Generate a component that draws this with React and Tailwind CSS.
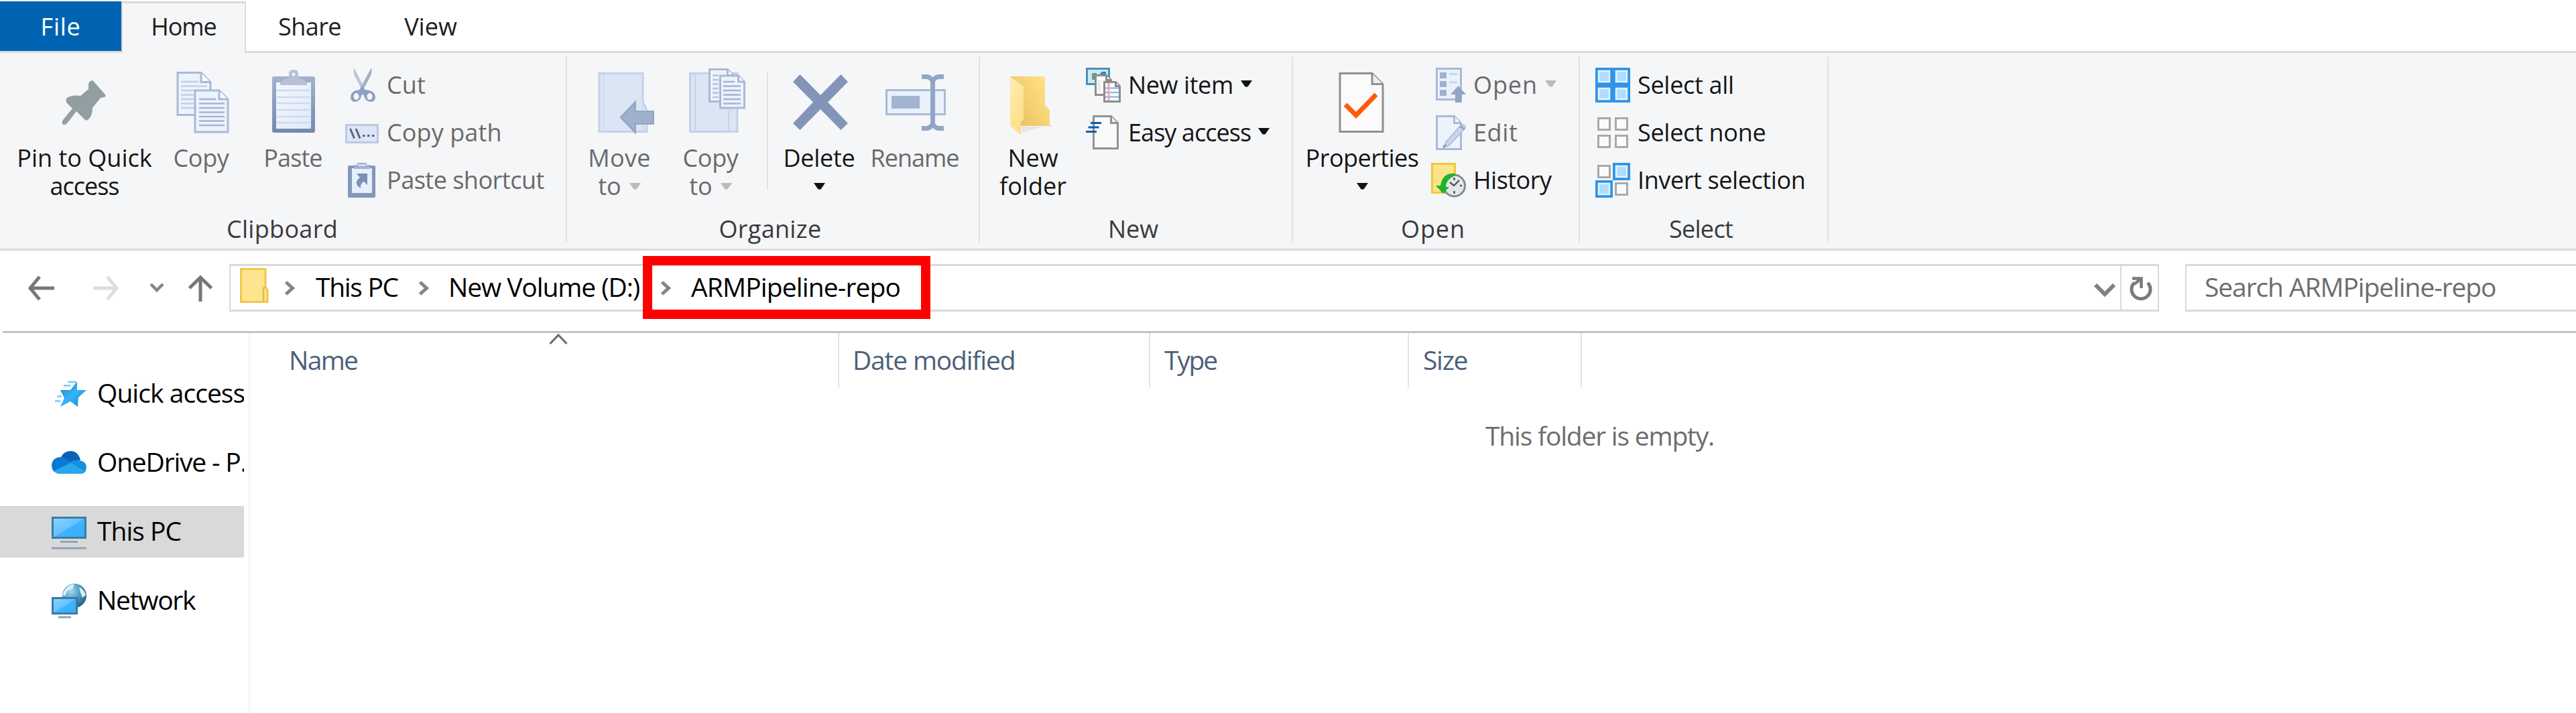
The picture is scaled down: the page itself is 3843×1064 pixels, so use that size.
import React from "react";

/* ---------- shared pieces ---------- */

function Big({ children }) {
  return (
    <svg className="block h-[104px] w-[104px] shrink-0" viewBox="0 0 104 104" fill="none">
      {children}
    </svg>
  );
}

function Small({ children }) {
  return (
    <svg className="block h-[52px] w-[52px] shrink-0" viewBox="0 0 52 52" fill="none">
      {children}
    </svg>
  );
}

function Caret({ muted }) {
  return (
    <svg className="block h-[10px] w-[17px] shrink-0" viewBox="0 0 17 10">
      <path d="M0 0H17L10.5 9.500H6.500Z" fill={muted ? "#b9bbbd" : "#111111"} />
    </svg>
  );
}

function Lines({ x1, x2, ys, color, w = 2.6 }) {
  return ys.map((y) => <path key={y} d={`M${x1} ${y}H${x2}`} stroke={color} strokeWidth={w} />);
}

function Doc({ x, y, w, h, f, stroke = "#a9bad6", fill = "#edf3fc", sw = 3, foldFill = "#f7faff" }) {
  return (
    <g stroke={stroke} strokeWidth={sw} fill={fill}>
      <path d={`M${x} ${y}H${x + w - f}L${x + w} ${y + f}V${y + h}H${x}Z`} />
      <path d={`M${x + w - f} ${y}V${y + f}H${x + w}`} fill={foldFill} />
    </g>
  );
}

/* ---------- large ribbon icons ---------- */

const PinIcon = () => (
  <Big>
    <path
      d="M63 22Q65 22 67 25L82 42Q85 45 82 47L76 48L64 63Q64 75 58 80Q55 83 52 80L40 68L26 86Q22 90 19 87Q18 84 20 81L34 64L26 56Q23 52 26 48Q33 43 46 45L58 35V27Q59 23 63 22Z"
      fill="#939ea3"
    />
  </Big>
);

const CopyIcon = () => (
  <Big>
    <Doc x={17} y={10.500} w={49} h={63} f={14} />
    <Lines x1={22} x2={48} ys={[24]} color="#c3d0e6" />
    <Lines x1={22} x2={61} ys={[30.500]} color="#c3d0e6" />
    <Lines x1={22} x2={42} ys={[37, 43.500, 50, 56.500, 63]} color="#c3d0e6" />
    <Doc x={43} y={37} w={49} h={62} f={13} />
    <Lines x1={49} x2={74} ys={[50]} color="#a4b6d3" />
    <Lines x1={49} x2={87} ys={[56.500, 63, 69.500, 76, 82.500, 89]} color="#a4b6d3" />
  </Big>
);

const PasteIcon = () => (
  <Big>
    <defs>
      <linearGradient id="board" x1="0" y1="0" x2="0" y2="1">
        <stop offset="0" stopColor="#a3b3ce" />
        <stop offset="1" stopColor="#7487ad" />
      </linearGradient>
      <linearGradient id="paper" x1="0" y1="0" x2="1" y2="1">
        <stop offset="0" stopColor="#f3f8ff" />
        <stop offset="1" stopColor="#dfe9f9" />
      </linearGradient>
    </defs>
    <rect x="21" y="16" width="64" height="84" rx="3" fill="url(#board)" />
    <rect x="27" y="25" width="52" height="69" fill="url(#paper)" />
    <Lines x1={28} x2={78} ys={[37, 47, 56, 66, 76, 85]} color="#d0daec" />
    <path d="M33 29V25Q38 20 46 18V12Q46 6 53 6Q60 6 60 12V18Q68 20 73 25V29Z" fill="#b7c1d3" />
    <circle cx="53" cy="13" r="2.500" fill="#f5f6f8" />
  </Big>
);

const MoveIcon = () => (
  <Big>
    <path d="M22 11.500H87V54L93 66V98.500H22Z" fill="#dbe5f4" stroke="#c3d1e7" strokeWidth="3" />
    <path d="M29 14V96M87 54V97" stroke="#cddaed" strokeWidth="2" />
    <path d="M52 77L77 51V67H104V88H77V103Z" fill="#a0b0cd" />
    <path d="M55 77L75.500 55.500V68.500H102.500V86.500H75.500V98.500Z" fill="none" stroke="#8fa1c2" strokeWidth="1.500" />
  </Big>
);

const CopyToIcon = () => (
  <Big>
    <path d="M21.500 11.500H92V98.500H21.500Z" fill="#dbe5f4" stroke="#c3d1e7" strokeWidth="3" />
    <path d="M29 14V96M79 97V70L82 64" stroke="#c5d3e8" strokeWidth="2" />
    <Doc x={50.500} y={5.500} w={36} h={48} f={9} />
    <Lines x1={55} x2={64} ys={[14.500, 21, 27.500, 34, 40.500, 47]} color="#b5c4dd" />
    <Doc x={66.500} y={15} w={36} h={48} f={9} />
    <Lines x1={71} x2={88} ys={[24]} color="#a4b6d3" />
    <Lines x1={71} x2={97} ys={[30.500, 37, 43.500, 50, 56.500]} color="#a4b6d3" />
  </Big>
);

const DeleteIcon = () => (
  <Big>
    <path
      d="M13 24L23.500 13L54 44L84.500 13L95 24L65 54.500L95 86L84.500 96L54 65L23.500 96L13 86L43 54.500Z"
      fill="#8295b8"
    />
  </Big>
);

const RenameIcon = () => (
  <Big>
    <rect x="9.500" y="36.500" width="87" height="36" fill="#e9f1fd" stroke="#a9bad6" strokeWidth="3" />
    <rect x="17" y="45" width="42" height="19" fill="#a3b4d0" />
    <path d="M62 16.500H70Q75 17 78.500 23Q82 17 87 16.500H95M78.500 20V90M62 93.500H70Q75 93 78.500 87Q82 93 87 93.500H95" stroke="#93a5c5" strokeWidth="7" />
  </Big>
);

const NewFolderIcon = () => (
  <Big>
    <defs>
      <linearGradient id="nfBack" x1="0" y1="1" x2="1" y2="0.300">
        <stop offset="0" stopColor="#e6bd5a" />
        <stop offset="1" stopColor="#ffe084" />
      </linearGradient>
      <linearGradient id="nfFront" x1="0" y1="0" x2="0.400" y2="1">
        <stop offset="0" stopColor="#ffedb3" />
        <stop offset="1" stopColor="#ffdf85" />
      </linearGradient>
    </defs>
    <path d="M34 91H82L78 88L36 100Z" fill="#e6e6e8" />
    <path d="M18 16H70V59L77 66V90H34Z" fill="url(#nfBack)" />
    <path d="M18 16L38 31V80L34 84V103L18 90Z" fill="url(#nfFront)" />
  </Big>
);

const PropertiesIcon = () => (
  <Big>
    <Doc x={19} y={11.500} w={64} h={87} f={16} stroke="#8f8f8f" fill="#fbfbfb" foldFill="#efefef" />
    <path d="M27 58L43 74L73 43" stroke="#ff5a0a" strokeWidth="7" />
  </Big>
);

/* ---------- small ribbon icons ---------- */

const CutIcon = () => (
  <Small>
    <path d="M14 0Q12 8 17 16L27 34L30 31Z" fill="#b9c5d8" />
    <path d="M40 0Q42 8 37 16L27 34L23 31Z" fill="#a3b0c9" />
    <path d="M26 28L31 33Q45 34 46 43Q46 51 39 51Q31 51 28 40H26Q23 51 16 51Q9 51 9 43Q10 34 22 33Z" fill="#8ea1c2" />
    <ellipse cx="17.500" cy="43" rx="4" ry="5" fill="#f5f6f8" />
    <ellipse cx="37.500" cy="43" rx="4" ry="5" fill="#f5f6f8" />
  </Small>
);

const CopyPathIcon = () => (
  <Small>
    <rect x="2.500" y="14.500" width="47" height="26" fill="#dde6f4" stroke="#bccae1" strokeWidth="3" />
    <path d="M8.500 20L14.500 34.500M17 20L23 34.500" stroke="#52678f" strokeWidth="3" />
    <path d="M27 29H30.500V32H27ZM34 29H37.500V32H34ZM41 29H44.500V32H41Z" fill="#52678f" />
  </Small>
);

const PasteShortcutIcon = () => (
  <Small>
    <rect x="5" y="4" width="41" height="48" rx="2" fill="#8497b9" />
    <rect x="11" y="8" width="30" height="37" fill="#e6effc" />
    <path d="M14 3H19V0H33V3H38V9H14Z" fill="#a3b1ca" />
    <path d="M20 3.500H32" stroke="#e6effc" strokeWidth="2" />
    <path d="M18 16H34V33L29 28Q23 31 24 38Q12 30 23 22Z" fill="#7c90b5" />
  </Small>
);

const NewItemIcon = () => (
  <Small>
    <rect x="1.500" y="1.500" width="33" height="23" fill="#c9ebf8" stroke="#4c90b6" strokeWidth="3" />
    <path d="M9 8H16V18H9Z" fill="#6f9a84" />
    <path d="M21 9L24 6H30V12H21Z" fill="#3c87ad" />
    <Doc x={14.500} y={11.500} w={23} h={29} f={7} stroke="#8c8c8c" fill="#fdfdfd" foldFill="#fff" />
    <path d="M20 18V36" stroke="#ececec" strokeWidth="4" />
    <Doc x={27.500} y={21.500} w={23} h={29} f={6} stroke="#8c8c8c" fill="#ffffff" foldFill="#fff" />
    <Lines x1={29} x2={49} ys={[30.500, 37, 43.500]} color="#93c1ea" />
    <path d="M34 23V49" stroke="#f3a6a6" strokeWidth="3" />
  </Small>
);

const EasyAccessIcon = () => (
  <Small>
    <Doc x={11.500} y={1.500} w={36} h={48} f={10} stroke="#929292" fill="#fafafa" foldFill="#f2f2f2" />
    <path d="M7 11.500H23M3.500 18H19.500M0 24.500H16" stroke="#0b60ad" strokeWidth="3.200" />
  </Small>
);

const OpenIcon = () => (
  <Small>
    <rect x="8.500" y="1.500" width="36" height="46" fill="#eaf1fc" stroke="#a9bad6" strokeWidth="3" />
    <path d="M13 7H23V16H13ZM13 20H23V29H13ZM13 33H23V42H13Z" fill="#9fb0cd" />
    <path d="M27 9.500H39M27 22H39" stroke="#c8d5ea" strokeWidth="3" />
    <path d="M40.500 27L52 40H45.500V52H36V40H29Z" fill="#92a5c6" />
  </Small>
);

const EditIcon = () => (
  <Small>
    <Doc x={8.500} y={1.500} w={36} h={49} f={10} />
    <path d="M19 48L22 40L45 14Q51 13 51 19L27 45Z" fill="#c9d5e9" stroke="#a9b9d4" strokeWidth="1.500" />
    <path d="M43 16L50 21" stroke="#93a5c5" strokeWidth="3" />
    <path d="M18 48L22 44" stroke="#8497b9" strokeWidth="3" />
  </Small>
);

const HistoryIcon = () => (
  <Small>
    <rect x="1.500" y="1.500" width="34" height="43" fill="#fde48c" stroke="#eec83f" strokeWidth="3" />
    <circle cx="34.500" cy="34" r="16" fill="#e4e8ea" stroke="#84898c" strokeWidth="3" />
    <path d="M34.500 22V26M34.500 42V46M43 34H46M28 29L34 34L42 26" stroke="#4b5256" strokeWidth="2.400" />
    <path d="M36 16Q17 14 14 34H7L18 46L27 36H22Q22 25 36 19Z" fill="#1fb52a" />
  </Small>
);

const BlueCell = ({ x, y }) => (
  <g>
    <rect x={x + 2} y={y + 2} width="22" height="22" fill="#b2dcff" stroke="#2d95ea" strokeWidth="4" />
    <rect x={x + 5} y={y + 5} width="16" height="16" stroke="#e3f3ff" strokeWidth="2.500" />
  </g>
);

const GreyCell = ({ x, y }) => (
  <rect x={x + 1.5} y={y + 1.5} width="17" height="17" fill="#fbfbfb" stroke="#a9a9a9" strokeWidth="3" />
);

const SelectAllIcon = () => (
  <Small>
    <BlueCell x={0} y={0} />
    <BlueCell x={26} y={0} />
    <BlueCell x={0} y={26} />
    <BlueCell x={26} y={26} />
  </Small>
);

const SelectNoneIcon = () => (
  <Small>
    <GreyCell x={3} y={3} />
    <GreyCell x={29} y={3} />
    <GreyCell x={3} y={29} />
    <GreyCell x={29} y={29} />
  </Small>
);

const InvertIcon = () => (
  <Small>
    <GreyCell x={3} y={3} />
    <BlueCell x={26} y={0} />
    <BlueCell x={0} y={26} />
    <GreyCell x={29} y={29} />
  </Small>
);

/* ---------- sidebar icons ---------- */

const StarIcon = () => (
  <Small>
    <defs>
      <linearGradient id="star" x1="0" y1="0" x2="1" y2="1">
        <stop offset="0" stopColor="#1583c4" />
        <stop offset="0.500" stopColor="#35b3fb" />
        <stop offset="1" stopColor="#1587cb" />
      </linearGradient>
    </defs>
    <path d="M38 7V20L52 20L40 31L39 45L28 37L13 45L19 32L13 20L28 20Z" fill="url(#star)" />
    <path d="M24 8H36M18 13.500H28M8 29.500H15M5 36.500H13" stroke="#7cc6ee" strokeWidth="2.500" />
  </Small>
);

const CloudIcon = () => (
  <Small>
    <path d="M13 19Q18 8 28 8Q39 8 43 21L28 30Z" fill="#0a62b8" />
    <path d="M10 41Q0 40 0 29Q1 18 13 17Q20 17 27 24L44 32L8 41Z" fill="#0b78d3" />
    <path d="M24 27Q30 21 42 22Q52 24 52 33Q51 42 43 42Z" fill="#1590df" />
    <path d="M4 38Q16 30 30 26L49 38Q47 42 42 42H11Q7 42 4 38Z" fill="#28a7ea" />
  </Small>
);

const MonitorIcon = () => (
  <Small>
    <defs>
      <linearGradient id="screen" x1="0" y1="0" x2="1" y2="1">
        <stop offset="0" stopColor="#8fd3ff" />
        <stop offset="0.500" stopColor="#65c2ff" />
        <stop offset="0.510" stopColor="#41b3ff" />
        <stop offset="1" stopColor="#34adff" />
      </linearGradient>
    </defs>
    <rect x="1.500" y="4.500" width="49" height="30" fill="url(#screen)" stroke="#3a7ca6" strokeWidth="3" />
    <path d="M13 40.500H39M0 50H52" stroke="#91a3b8" strokeWidth="3" />
  </Small>
);

const NetworkIcon = () => (
  <Small>
    <defs>
      <radialGradient id="globe" cx="0.350" cy="0.300" r="0.800">
        <stop offset="0" stopColor="#a5dbea" />
        <stop offset="0.500" stopColor="#4a9cc2" />
        <stop offset="1" stopColor="#1f5878" />
      </radialGradient>
    </defs>
    <circle cx="34" cy="18" r="18" fill="url(#globe)" />
    <path d="M21 8Q27 0 34 1L31 8L24 10L20 18H17Q17 12 21 8ZM41 5Q49 9 51 17L46 21L43 13Z" fill="#d9f0f3" />
    <rect x="1.500" y="21.500" width="36" height="23" fill="url(#screen)" stroke="#3a7ca6" strokeWidth="3" />
    <path d="M10 50H29" stroke="#91a3b8" strokeWidth="3" />
  </Small>
);

/* ---------- ribbon building blocks ---------- */

function Group({ width, label, labelClass, children }) {
  return (
    <section className={`flex h-full shrink-0 flex-col border-r-2 border-[#dfe1e3] ${width}`}>
      <div className="flex h-[236px] shrink-0 items-start">{children}</div>
      <div className={`text-center leading-[41px] text-[#3a3a3a] ${labelClass}`}>{label}</div>
    </section>
  );
}

function BigButton({ className, icon, muted, children }) {
  return (
    <button
      className={`flex shrink-0 flex-col items-center pt-[13px] leading-[42px] ${muted ? "text-[#6a6a6a]" : "text-[#161616]"} ${className}`}
    >
      {icon}
      <div className="h-[13px] shrink-0" />
      {children}
    </button>
  );
}

function Row({ icon, text, track, muted, caret }) {
  return (
    <button className={`flex h-[71px] items-center gap-[11px] ${muted ? "text-[#6a6a6a]" : "text-[#161616]"}`}>
      <span className="flex items-center gap-[11px]">
        {icon}
        <span className={`leading-[44px] ${track}`}>{text}</span>
      </span>
      {caret && (
        <span className="pb-[3px]">
          <Caret muted={muted} />
        </span>
      )}
    </button>
  );
}

function Crumb() {
  return (
    <svg className="block h-[22px] w-[16px] shrink-0" viewBox="0 0 16 22" fill="none">
      <path d="M2.500 2L12.500 11L2.500 20" stroke="#868686" strokeWidth="5" />
    </svg>
  );
}

function SideItem({ icon, text, track, selected }) {
  return (
    <div className={`flex h-[77px] w-[364px] items-center gap-[16px] overflow-hidden pl-[77px] ${selected ? "bg-[#d9d9d9]" : ""}`}>
      {icon}
      <span className={`pb-[3px] leading-[54px] text-black ${track}`}>{text}</span>
    </div>
  );
}

/* ---------- page ---------- */

export default function App() {
  return (
    <div className="flex h-[1064px] w-[3843px] flex-col overflow-hidden whitespace-nowrap bg-white font-['Open_Sans','Noto_Sans',sans-serif] text-[36px]">
      {/* tabs */}
      <nav className="flex h-[76px] shrink-0 pt-[2px] leading-[75px] text-[#202020]">
        <div className="w-[181px] bg-[#0063b1] text-center tracking-[0.7px] text-white">File</div>
        <div className="z-10 -mb-[3px] w-[186px] border-x-2 border-t-3 border-[#d9dbdd] bg-[#f5f6f8] text-center leading-[70px] tracking-[-1.1px]">Home</div>
        <div className="w-[190px] text-center tracking-[-0.6px]">Share</div>
        <div className="w-[171px] text-center">View</div>
      </nav>

      {/* ribbon */}
      <div className="flex h-[298px] shrink-0 border-y-3 border-[#d9dbdd] bg-[#f5f6f8] pb-[9px] pt-[6px]">
        <Group width="w-[846px]" label="Clipboard" labelClass="pr-[2px] tracking-[0.3px]">
          <BigButton className="ml-[14px] w-[224px]" icon={<PinIcon />}>
            <span>Pin to Quick</span>
            <span className="tracking-[-1px]">access</span>
          </BigButton>
          <BigButton className="w-[124px]" icon={<CopyIcon />} muted>
            <span className="tracking-[-0.4px]">Copy</span>
          </BigButton>
          <BigButton className="w-[150px]" icon={<PasteIcon />} muted>
            <span className="tracking-[-0.9px]">Paste</span>
          </BigButton>
          <div className="flex flex-col pl-[2px] pt-[6px]">
            <Row icon={<CutIcon />} text="Cut" track="tracking-[0.1px]" muted />
            <Row icon={<CopyPathIcon />} text="Copy path" track="tracking-[0.1px]" muted />
            <Row icon={<PasteShortcutIcon />} text="Paste shortcut" track="tracking-[-0.5px]" muted />
          </div>
        </Group>

        <Group width="w-[616px]" label="Organize" labelClass="pr-[8px] tracking-[0.3px]">
          <BigButton className="ml-[10px] w-[136px]" icon={<MoveIcon />} muted>
            <span className="tracking-[0.3px]">Move</span>
            <span className="flex items-center gap-[12px]">to<Caret muted /></span>
          </BigButton>
          <BigButton className="w-[136px]" icon={<CopyToIcon />} muted>
            <span className="tracking-[-0.4px]">Copy</span>
            <span className="flex items-center gap-[12px]">to<Caret muted /></span>
          </BigButton>
          <div className="ml-[16px] mt-[23px] h-[176px] w-[2px] bg-[#dfe1e3]" />
          <BigButton className="w-[152px]" icon={<DeleteIcon />}>
            <span className="tracking-[-0.3px]">Delete</span>
            <span className="flex h-[42px] items-center"><Caret /></span>
          </BigButton>
          <BigButton className="w-[133px]" icon={<RenameIcon />} muted>
            <span className="tracking-[-1px]">Rename</span>
          </BigButton>
        </Group>

        <Group width="w-[467px]" label="New" labelClass="pr-[8px]">
          <BigButton className="w-[158px]" icon={<NewFolderIcon />}>
            <span>New</span>
            <span>folder</span>
          </BigButton>
          <div className="flex flex-col pt-[6px]">
            <Row icon={<NewItemIcon />} text="New item" track="tracking-[-0.4px]" caret />
            <Row icon={<EasyAccessIcon />} text="Easy access" track="tracking-[-0.94px]" caret />
          </div>
        </Group>

        <Group width="w-[428px]" label="Open" labelClass="pr-[8px] tracking-[0.9px]">
          <BigButton className="w-[206px]" icon={<PropertiesIcon />}>
            <span className="tracking-[-0.55px]">Properties</span>
            <span className="flex h-[42px] items-center"><Caret /></span>
          </BigButton>
          <div className="flex flex-col pt-[6px]">
            <Row icon={<OpenIcon />} text="Open" track="tracking-[0.9px]" muted caret />
            <Row icon={<EditIcon />} text="Edit" track="tracking-[0.6px]" muted />
            <Row icon={<HistoryIcon />} text="History" track="tracking-[-0.5px]" />
          </div>
        </Group>

        <Group width="w-[371px]" label="Select" labelClass="pr-[8px] tracking-[-0.7px]">
          <div className="flex flex-col pl-[23px] pt-[6px]">
            <Row icon={<SelectAllIcon />} text="Select all" track="tracking-[-0.3px]" />
            <Row icon={<SelectNoneIcon />} text="Select none" track="tracking-[-0.3px]" />
            <Row icon={<InvertIcon />} text="Invert selection" track="tracking-[-0.4px]" />
          </div>
        </Group>
      </div>

      {/* address bar */}
      <div className="relative flex h-[120px] shrink-0 items-start pt-[20px] text-[39px]">
        <div className="flex h-[71px] w-[342px] shrink-0 items-center">
          <svg className="ml-[41px] h-[40px] w-[40px] shrink-0" viewBox="0 0 40 40" fill="none">
            <path d="M18 3L4 20L18 37M4 20H40" stroke="#777777" strokeWidth="5" />
          </svg>
          <svg className="ml-[58px] h-[40px] w-[40px] shrink-0" viewBox="0 0 40 40" fill="none">
            <path d="M21 3L35 20L21 37M0 20H35" stroke="#dedede" strokeWidth="5" />
          </svg>
          <svg className="ml-[44px] h-[14px] w-[22px] shrink-0" viewBox="0 0 22 14" fill="none">
            <path d="M2 1L11 10L20 1" stroke="#858585" strokeWidth="4.500" />
          </svg>
          <svg className="ml-[35px] h-[40px] w-[38px] shrink-0" viewBox="0 0 38 40" fill="none">
            <path d="M2.500 20L19 4L35.500 20M19 4V40" stroke="#777777" strokeWidth="5" />
          </svg>
        </div>

        <div className="flex h-[71px] w-[2879px] shrink-0 items-center border-x-2 border-y-3 border-[#d9d9d9] text-black">
          <svg className="ml-[13px] -mt-[7px] h-[52px] w-[44px] shrink-0" viewBox="0 0 44 52" fill="none">
            <path d="M2.500 1.500H39V28L42 33V50.500H2.500Z" fill="#fee48f" stroke="#efc94b" strokeWidth="3" />
            <path d="M36 49V30L39 28" stroke="#e6bb3e" strokeWidth="2.500" />
          </svg>
          <span className="ml-[23px]"><Crumb /></span>
          <span className="ml-[31px] w-[122px] pb-[4px] leading-[54px] tracking-[-1.3px]">This PC</span>
          <span className="ml-[31px]"><Crumb /></span>
          <span className="ml-[29px] w-[284px] pb-[4px] leading-[54px] tracking-[-1.1px]">New Volume (D:)</span>
          <span className="ml-[32px]"><Crumb /></span>
          <span className="ml-[30px] pb-[4px] leading-[54px] tracking-[-0.87px]">ARMPipeline-repo</span>
          <svg className="ml-auto mt-[6px] h-[22px] w-[32px] shrink-0" viewBox="0 0 32 22" fill="none">
            <path d="M2 3L16 17L30 3" stroke="#808080" strokeWidth="6" />
          </svg>
          <div className="ml-[7px] flex h-full w-[56px] items-center justify-center border-l-2 border-[#d9d9d9] pl-[3px]">
            <svg className="h-[38px] w-[36px]" viewBox="0 0 36 38" fill="none">
              <path d="M8 11A14 14 0 1 0 28 11" stroke="#7a7a7a" strokeWidth="5" />
              <path d="M5 4.500H18.500V19" stroke="#7a7a7a" strokeWidth="4.500" />
              <path d="M18 5L8 13" stroke="#7a7a7a" strokeWidth="4.500" />
            </svg>
          </div>
        </div>

        <div className="-mr-[4px] ml-[39px] flex h-[71px] grow items-center border-y-3 border-l-2 border-[#d9d9d9] pl-[27px] text-[#6d6d6d]">
          <span className="pb-[4px] leading-[54px] tracking-[-1.1px]">Search ARMPipeline-repo</span>
        </div>

        {/* highlight frame laid over the last path segment */}
        <div className="absolute left-[959px] top-[8px] h-[94px] w-[429px] border-[14px] border-[#ff0000]" />
      </div>

      {/* body */}
      <div className="ml-[4px] h-[3px] shrink-0 bg-[#c3c3c3]" />
      <div className="flex grow text-[39px]">
        <aside className="flex w-[373px] shrink-0 flex-col gap-[26px] border-r-2 border-[#f3f3f3] pt-[52px]">
          <SideItem icon={<StarIcon />} text="Quick access" track="tracking-[-0.95px]" />
          <SideItem icon={<CloudIcon />} text="OneDrive - P." track="tracking-[-1.2px]" />
          <SideItem icon={<MonitorIcon />} text="This PC" track="tracking-[-1px]" selected />
          <SideItem icon={<NetworkIcon />} text="Network" track="tracking-[-1.3px]" />
        </aside>

        <main className="flex grow flex-col">
          <div className="flex h-[81px] items-start text-[#4c607a]">
            <div className="flex h-full w-[879px] border-r-2 border-[#e3e3e3] pl-[58px] pt-[13px] leading-[54px] tracking-[-1.7px]">
              <span className="w-[388px]">Name</span>
              <svg className="-mt-[13px] h-[18px] w-[28px]" viewBox="0 0 28 18" fill="none">
                <path d="M1.500 16L14 3L26.500 16" stroke="#6b6b6b" strokeWidth="3" />
              </svg>
            </div>
            <div className="h-full w-[464px] border-r-2 border-[#e3e3e3] pl-[20px] pt-[13px] leading-[54px] tracking-[-1.2px]">Date modified</div>
            <div className="h-full w-[386px] border-r-2 border-[#e3e3e3] pl-[21px] pt-[13px] leading-[54px] tracking-[-2.2px]">Type</div>
            <div className="h-full w-[258px] border-r-2 border-[#e3e3e3] pl-[21px] pt-[13px] leading-[54px] tracking-[-1.3px]">Size</div>
          </div>
          <p className="mt-[45px] pl-[1843px] leading-[54px] tracking-[-1.2px] text-[#6d6d6d]">This folder is empty.</p>
        </main>
      </div>
    </div>
  );
}
